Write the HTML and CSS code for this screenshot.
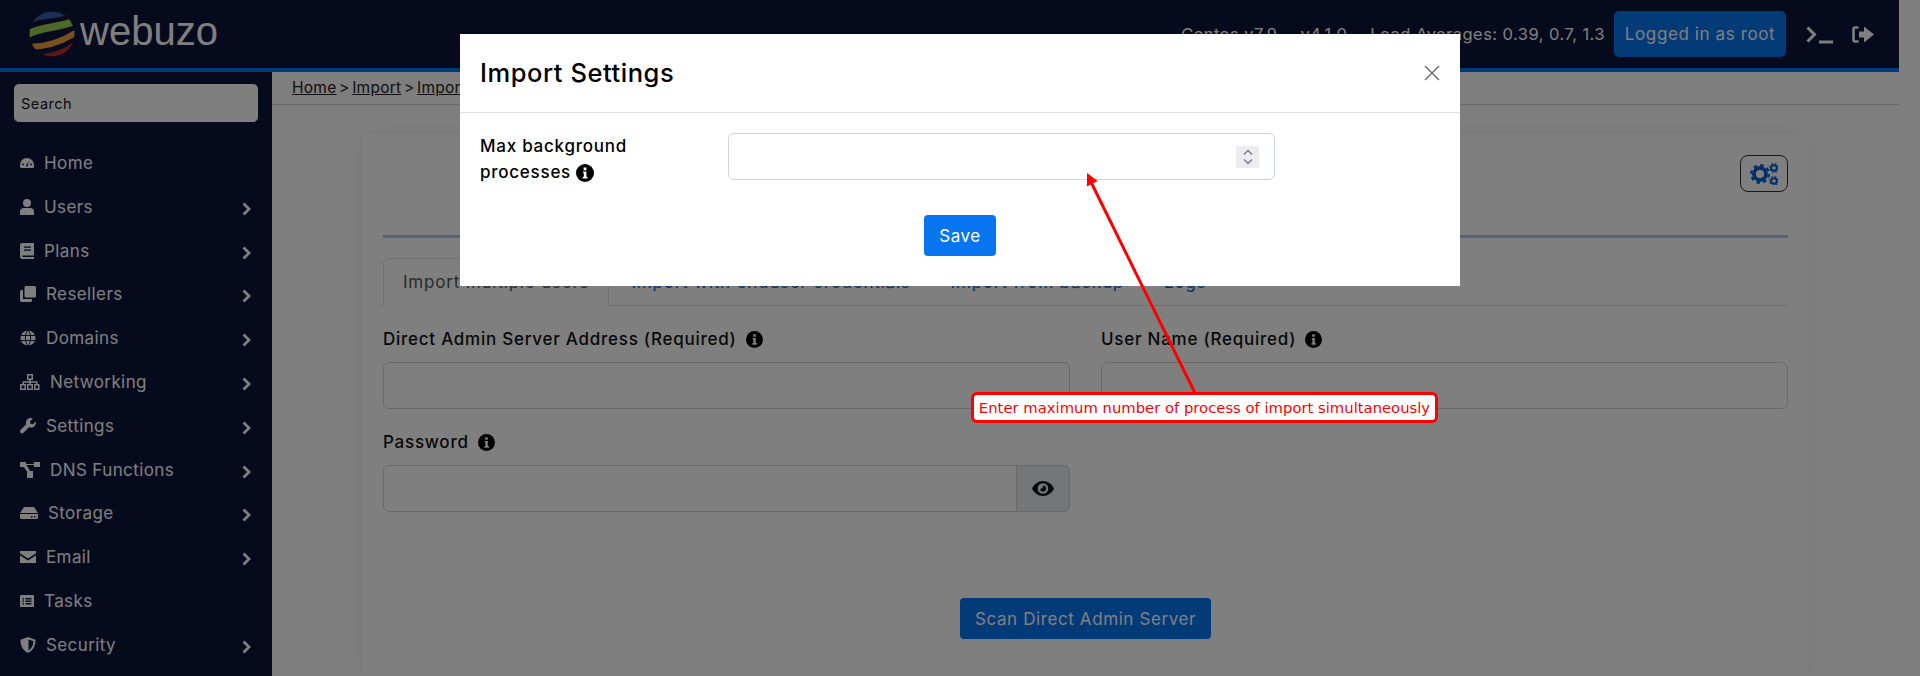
FILE: index.html
```html
<!DOCTYPE html>
<html lang="en">
<head>
<meta charset="utf-8">
<title>Webuzo - Import Settings</title>
<link rel="stylesheet" href="styles.css">
</head>
<body>
<div class="page">
  <header class="topbar">
    <a class="logo">
      <svg class="logo-mark" viewBox="28 10 48 48" width="48" height="48">
        <defs><clipPath id="sphere"><circle cx="52" cy="34" r="22.5"/></clipPath></defs>
        <g clip-path="url(#sphere)" fill="none" stroke-linecap="butt">
          <path d="M28 22C38 13 54 17 68 11" stroke="#3a5ea8" stroke-width="7"/>
          <path d="M27 35C40 26 58 29 77 20" stroke="#9ad050" stroke-width="7.5"/>
          <path d="M29 47C42 47 60 43 77 32" stroke="#f0a040" stroke-width="6"/>
          <path d="M40 57C52 56 66 52 77 42" stroke="#b83030" stroke-width="5"/>
        </g>
      </svg>
      <span class="logo-text">webuzo</span>
    </a>
    <div class="status">
      <span>Centos v7.9</span>
      <span>v4.1.0</span>
      <span>Load Averages: 0.39, 0.7, 1.3</span>
    </div>
    <button class="btn btn-user">Logged in as root</button>
    <svg class="icon-terminal" viewBox="0 0 27 18" width="27" height="18"><path d="M1.5 1.5 8.5 8.5 1.5 15.5" fill="none" stroke="currentColor" stroke-width="3"/><rect x="13" y="14.5" width="14" height="3" fill="currentColor"/></svg>
    <svg class="icon-logout" viewBox="0 0 22 17" width="22" height="17"><path d="M6.5 1.5H3A1.5 1.5 0 0 0 1.500 3V14A1.500 1.500 0 0 0 3 15.500H6.500" fill="none" stroke="currentColor" stroke-width="2.600"/><path d="M7 5.500H12V0.500L22 8.500 12 16.500V11.500H7Z" fill="currentColor"/></svg>
  </header>

  <div class="shell">
    <aside class="sidebar">
      <input class="search" type="text" placeholder="Search">
      <nav class="menu">
        <a class="item">
          <svg width="14" height="14" viewBox="0 0 14 14"><path fill-rule="evenodd" d="M7 2a7 7 0 0 1 7 7v2a1 1 0 0 1-1 1H1a1 1 0 0 1-1-1V9a7 7 0 0 1 7-7ZM6.300 9a.9.9 0 1 0 1.400 0L9 5 6.300 9ZM3 7.500a.9.900 0 1 0 0 1.800.9.900 0 0 0 0-1.800ZM11 7.500a.9.900 0 1 0 0 1.800.9.900 0 0 0 0-1.800Z" fill="currentColor"/></svg>
          <span>Home</span>
        </a>
        <a class="item">
          <svg width="14" height="16" viewBox="0 0 14 16"><circle cx="7" cy="4" r="4" fill="currentColor"/><path d="M0 16V13a4 4 0 0 1 4-4h6a4 4 0 0 1 4 4v3Z" fill="currentColor"/></svg>
          <span>Users</span>
          <svg class="chev" width="9" height="14" viewBox="0 0 9 14"><path d="M1.500 1.500 7 7 1.500 12.500" fill="none" stroke="currentColor" stroke-width="2.400"/></svg>
        </a>
        <a class="item">
          <svg width="14" height="16" viewBox="0 0 14 16"><path fill-rule="evenodd" d="M2 0H14V12.500H2.500V14H14V16H2A2 2 0 0 1 0 14V2A2 2 0 0 1 2 0ZM4 3.500V4.800H11V3.500ZM4 6.500V7.800H11V6.500Z" fill="currentColor"/></svg>
          <span>Plans</span>
          <svg class="chev" width="9" height="14" viewBox="0 0 9 14"><path d="M1.500 1.500 7 7 1.500 12.500" fill="none" stroke="currentColor" stroke-width="2.400"/></svg>
        </a>
        <a class="item">
          <svg width="16" height="16" viewBox="0 0 16 16"><rect x="4.500" y="0" width="11.500" height="11.500" rx="1.500" fill="currentColor"/><path d="M3 4H1.500A1.500 1.500 0 0 0 0 5.500V14.500A1.500 1.500 0 0 0 1.500 16H10.500A1.500 1.500 0 0 0 12 14.500V13H3Z" fill="currentColor"/></svg>
          <span>Resellers</span>
          <svg class="chev" width="9" height="14" viewBox="0 0 9 14"><path d="M1.500 1.500 7 7 1.500 12.500" fill="none" stroke="currentColor" stroke-width="2.400"/></svg>
        </a>
        <a class="item">
          <svg width="16" height="16" viewBox="0 0 16 16"><circle cx="8" cy="8" r="7.500" fill="currentColor"/><path d="M0 5.500H16M0 10.500H16M8 0C4.500 4 4.500 12 8 16M8 0C11.500 4 11.500 12 8 16" fill="none" stroke="#0c143a" stroke-width="1"/></svg>
          <span>Domains</span>
          <svg class="chev" width="9" height="14" viewBox="0 0 9 14"><path d="M1.500 1.500 7 7 1.500 12.500" fill="none" stroke="currentColor" stroke-width="2.400"/></svg>
        </a>
        <a class="item">
          <svg width="20" height="16" viewBox="0 0 20 16"><path fill-rule="evenodd" d="M7 0H13V6H10.800V7.300H17.500V10H19.500V16H14V10H16V8.700H10.800V10H13V16H7V10H9.200V8.700H4V10H6V16H0V10H2.500V7.300H9.200V6H7ZM8.500 1.500V4.500H11.500V1.500ZM1.500 11.500V14.500H4.500V11.500ZM8.500 11.500V14.500H11.500V11.500ZM15.500 11.500V14.500H18V11.500Z" fill="currentColor"/></svg>
          <span>Networking</span>
          <svg class="chev" width="9" height="14" viewBox="0 0 9 14"><path d="M1.500 1.500 7 7 1.500 12.500" fill="none" stroke="currentColor" stroke-width="2.400"/></svg>
        </a>
        <a class="item">
          <svg width="16" height="16" viewBox="0 0 16 16"><path d="M15.800 3.500 13 6.300 10.500 5.700 10 3.200 12.800.4C10.800-.5 8.500 0 7.200 1.500 5.900 2.800 5.600 4.700 6.200 6.300L.7 11.800A2 2 0 0 0 3.500 14.700L9 9.200C11 10 13.200 9.500 14.600 8 15.900 6.700 16.300 5 15.800 3.500Z" fill="currentColor"/></svg>
          <span>Settings</span>
          <svg class="chev" width="9" height="14" viewBox="0 0 9 14"><path d="M1.500 1.500 7 7 1.500 12.500" fill="none" stroke="currentColor" stroke-width="2.400"/></svg>
        </a>
        <a class="item">
          <svg width="20" height="16" viewBox="0 0 20 16"><path d="M0 0H6V2H14V0H20V5H14V3H6.500L10 9H13V16H7V9.500L3.800 5H0Z" fill="currentColor"/></svg>
          <span>DNS Functions</span>
          <svg class="chev" width="9" height="14" viewBox="0 0 9 14"><path d="M1.500 1.500 7 7 1.500 12.500" fill="none" stroke="currentColor" stroke-width="2.400"/></svg>
        </a>
        <a class="item">
          <svg width="18" height="12" viewBox="0 0 18 12"><path d="M4 0H14L18 6H0Z" fill="currentColor"/><path fill-rule="evenodd" d="M0 7H18V10.500A1.500 1.500 0 0 1 16.500 12H1.500A1.500 1.500 0 0 1 0 10.500ZM11 9V10.500H12.500V9ZM14 9V10.500H15.500V9Z" fill="currentColor"/></svg>
          <span>Storage</span>
          <svg class="chev" width="9" height="14" viewBox="0 0 9 14"><path d="M1.500 1.500 7 7 1.500 12.500" fill="none" stroke="currentColor" stroke-width="2.400"/></svg>
        </a>
        <a class="item">
          <svg width="16" height="12" viewBox="0 0 16 12"><path d="M0 0H16V2.200L8 7.500 0 2.200ZM0 4.200 8 9.500 16 4.200V12H0Z" fill="currentColor"/></svg>
          <span>Email</span>
          <svg class="chev" width="9" height="14" viewBox="0 0 9 14"><path d="M1.500 1.500 7 7 1.500 12.500" fill="none" stroke="currentColor" stroke-width="2.400"/></svg>
        </a>
        <a class="item">
          <svg width="14" height="12" viewBox="0 0 14 12"><path fill-rule="evenodd" d="M1 0H13A1 1 0 0 1 14 1V11A1 1 0 0 1 13 12H1A1 1 0 0 1 0 11V1A1 1 0 0 1 1 0ZM2.500 3V4.500H4V3ZM5.500 3V4.500H11.500V3ZM2.500 5.500V7H4V5.500ZM5.500 5.500V7H11.500V5.500ZM2.500 8V9.500H4V8ZM5.500 8V9.500H11.500V8Z" fill="currentColor"/></svg>
          <span>Tasks</span>
        </a>
        <a class="item">
          <svg width="16" height="16" viewBox="0 0 16 16"><path fill-rule="evenodd" d="M8 0 15.500 2.800C15.800 8.500 13 13.800 8 16 3 13.800.2 8.500.5 2.800ZM8.500 2.500V13.500C11.500 11.800 13.300 8.300 13.400 4.300Z" fill="currentColor"/></svg>
          <span>Security</span>
          <svg class="chev" width="9" height="14" viewBox="0 0 9 14"><path d="M1.500 1.500 7 7 1.500 12.500" fill="none" stroke="currentColor" stroke-width="2.400"/></svg>
        </a>
      </nav>
    </aside>

    <main class="content">
      <div class="crumbs"><a>Home</a> &gt; <a>Import</a> &gt; <a>Import</a></div>
      <section class="card">
        <div class="card-head">
          <button class="gear-btn" aria-label="Import settings">
            <svg width="28" height="22" viewBox="0 0 28 22">
              <circle cx="10" cy="11" r="6" fill="none" stroke="#0a5fd0" stroke-width="3.800"/>
              <circle cx="10" cy="11" r="8.800" fill="none" stroke="#0a5fd0" stroke-width="2.400" stroke-dasharray="3.500 3.410"/>
              <circle cx="24" cy="5" r="2.800" fill="none" stroke="#0a5fd0" stroke-width="2"/>
              <circle cx="24" cy="5" r="4.300" fill="none" stroke="#0a5fd0" stroke-width="1.400" stroke-dasharray="1.800 1.580"/>
              <circle cx="24" cy="18" r="2.800" fill="none" stroke="#0a5fd0" stroke-width="2"/>
              <circle cx="24" cy="18" r="4.300" fill="none" stroke="#0a5fd0" stroke-width="1.400" stroke-dasharray="1.800 1.580"/>
            </svg>
          </button>
        </div>
        <hr class="rule">
        <ul class="tabs">
          <li class="tab active">Import multiple users</li>
          <li class="tab">Import with enduser credentials</li>
          <li class="tab">Import from backup</li>
          <li class="tab">Logs</li>
        </ul>
        <form class="form">
          <div class="field">
            <label class="label">Direct Admin Server Address (Required) <svg class="info" width="17" height="17" viewBox="0 0 17 17"><circle cx="8.500" cy="8.500" r="8.500"/><path d="M7.200 3.300H9.800V5.800H7.200ZM6.800 7H9.800V12H10.800V13.700H6.400V12H7.400V8.700H6.800Z" fill="#fff"/></svg></label>
            <input class="input" type="text">
          </div>
          <div class="field">
            <label class="label">User Name (Required) <svg class="info" width="17" height="17" viewBox="0 0 17 17"><circle cx="8.500" cy="8.500" r="8.500"/><path d="M7.200 3.300H9.800V5.800H7.200ZM6.800 7H9.800V12H10.800V13.700H6.400V12H7.400V8.700H6.800Z" fill="#fff"/></svg></label>
            <input class="input" type="text">
          </div>
          <div class="field">
            <label class="label">Password <svg class="info" width="17" height="17" viewBox="0 0 17 17"><circle cx="8.500" cy="8.500" r="8.500"/><path d="M7.200 3.300H9.800V5.800H7.200ZM6.800 7H9.800V12H10.800V13.700H6.400V12H7.400V8.700H6.800Z" fill="#fff"/></svg></label>
            <div class="input-group">
              <input class="input input-flat" type="password">
              <span class="addon">
                <svg width="22" height="15" viewBox="0 0 22 15"><path fill-rule="evenodd" d="M11 0C16 0 20 3.200 22 7.500 20 11.800 16 15 11 15S2 11.800 0 7.500C2 3.200 6 0 11 0ZM11 2.200A5.300 5.300 0 1 0 11 12.800 5.300 5.300 0 0 0 11 2.200ZM11 4.400A3.100 3.100 0 1 1 8 8C9.800 8 11.200 6.500 11 4.400Z" fill="#111"/></svg>
              </span>
            </div>
          </div>
        </form>
        <div class="actions"><button class="btn btn-scan">Scan Direct Admin Server</button></div>
      </section>
    </main>
  </div>
</div>

<div class="backdrop">
  <div class="modal">
    <div class="modal-head">
      <h2 class="modal-title">Import Settings</h2>
      <svg class="close" width="16" height="16" viewBox="0 0 16 16"><path d="M1 1 15 15M15 1 1 15" stroke="#6f6f6f" stroke-width="1.500" fill="none"/></svg>
    </div>
    <div class="modal-body">
      <div class="modal-row">
        <label class="modal-label">Max background processes <svg class="info-m" width="18" height="18" viewBox="0 0 17 17"><circle cx="8.500" cy="8.500" r="8.500"/><path d="M7.200 3.300H9.800V5.800H7.200ZM6.800 7H9.800V12H10.800V13.700H6.400V12H7.400V8.700H6.800Z" fill="#fff"/></svg></label>
        <div class="number">
          <span class="spin">
            <svg width="12" height="18" viewBox="0 0 12 18"><path d="M2 6.500 6 2.500 10 6.500M2 11.500 6 15.500 10 11.500" fill="none" stroke="#77778a" stroke-width="1.300"/></svg>
          </span>
        </div>
      </div>
      <div class="modal-actions"><button class="btn btn-save">Save</button></div>
    </div>
  </div>

  <svg class="callout-arrow" width="1920" height="676" viewBox="0 0 1920 676">
    <path d="M1195 393 1091 182" stroke="#f00" stroke-width="3" fill="none"/>
    <path d="M1087 173 1097.700 181.100 1086.900 186.500Z" fill="#f00"/>
  </svg>
  <div class="callout">Enter maximum number of process of import simultaneously</div>
</div>
</body>
</html>
```
FILE: styles.css
```css
* { box-sizing: border-box; }
html, body { margin: 0; height: 676px; overflow: hidden; background: #fff; }
body { font-family: Inter, "Noto Sans", "Liberation Sans", sans-serif; font-size: 16px; color: #111; }
svg { display: block; flex: none; }

.page { margin-right: 21px; height: 676px; display: flex; flex-direction: column; overflow: hidden; }

.topbar { height: 72px; flex: none; background: #0c143a; border-bottom: 4px solid #0774f0; color: #fff; display: flex; align-items: center; padding: 0 25px 0 28px; }
.logo { display: flex; align-items: center; gap: 4px; }
.logo-text { font-family: "Liberation Sans", Arial, sans-serif; font-size: 40px; line-height: 48px; color: #fff; margin-top: -6px; }
.status { margin-left: auto; display: flex; gap: 23px; font-size: 16.500px; letter-spacing: .45px; margin-right: 9px; white-space: nowrap; }
.btn { border: 0; border-radius: 5px; background: #0774f0; color: #fff; font: inherit; font-size: 17px; letter-spacing: .6px; white-space: nowrap; }
.btn-user { width: 172px; height: 46px; padding: 0; }
.icon-terminal { margin-left: 20px; margin-top: 1px; }
.icon-logout { margin-left: 19px; }

.shell { flex: 1; display: flex; min-height: 0; }
.sidebar { width: 272px; flex: none; background: #0c143a; color: #fff; padding: 12px 14px 0; }
.search { display: block; width: 244px; height: 38px; border: 0; border-radius: 5px; padding: 0 7px; background: #fff; font: 14.500px Inter, sans-serif; letter-spacing: .5px; }
.search::placeholder { color: #111; opacity: 1; }
.menu { margin: 19px 0 0 6px; width: 232px; }
.item { height: 43.820px; display: flex; align-items: center; gap: 10px; font-size: 17px; letter-spacing: .4px; }
.chev { margin-left: auto; margin-top: 4px; margin-right: 1px; }
.chev path { stroke-width: 2.800px; }

.content { flex: 1; min-width: 0; background: #fdfdfd; display: flex; flex-direction: column; }
.crumbs { height: 33px; flex: none; line-height: 31px; padding-left: 20px; border-bottom: 1px solid #d6d6d6; font-size: 15.500px; letter-spacing: .25px; word-spacing: -2px; color: #222; white-space: nowrap; }
.crumbs a { text-decoration: underline; }
.card { flex: 1; min-height: 0; margin: 30px 91px 0; padding: 20px 20px 0; background: #fff; box-shadow: 0 0 24px rgba(0, 0, 0, .03); }
.card-head { display: flex; justify-content: flex-end; }
.gear-btn { width: 48px; height: 37px; padding: 0; border: 1px solid #333; border-radius: 8px; background: transparent; display: flex; align-items: center; justify-content: center; }
.rule { height: 3px; border: 0; margin: 43px 0 20px; background: #a8c8f0; }

.tabs { list-style: none; display: flex; margin: 0; padding: 0; height: 48px; border-bottom: 1px solid #dee2e6; }
.tab { padding: 0 19px; line-height: 46px; color: #0a5fd0; white-space: nowrap; font-size: 17px; letter-spacing: .8px; border: 1px solid transparent; border-bottom: 0; }
.tab.active { color: #555; border-color: #dee2e6; background: #fff; border-radius: 6px 6px 0 0; margin-right: 2px; height: 48px; }

.form { margin-top: 21px; display: grid; grid-template-columns: 1fr 1fr; column-gap: 31px; row-gap: 21px; }
.label { display: flex; align-items: center; gap: 9px; height: 24px; margin-bottom: 11px; font-weight: 500; font-size: 17px; letter-spacing: .75px; color: #111; }
.input { display: block; width: 100%; height: 47px; border: 1px solid #ced4da; border-radius: 6px; background: #fff; }
.input-group { display: flex; }
.input-flat { border-radius: 6px 0 0 6px; flex: 1; }
.addon { width: 53px; flex: none; background: #e9ecef; border: 1px solid #ced4da; border-left: 0; border-radius: 0 6px 6px 0; display: flex; align-items: center; justify-content: center; }
.actions { margin-top: 86px; display: flex; justify-content: center; }
.btn-scan { width: 251px; height: 41px; padding: 0; border-radius: 4px; }

.backdrop { position: fixed; inset: 0; background: rgba(0, 0, 0, .5); }
.modal { position: absolute; left: 460px; top: 34px; width: 1000px; height: 252px; background: #fff; color: #000; }
.modal-head { height: 79px; border-bottom: 1px solid #dee2e6; display: flex; align-items: center; justify-content: space-between; padding: 0 20px; }
.modal-title { margin: 0; font-size: 25.500px; font-weight: 500; letter-spacing: .55px; line-height: 36px; }
.modal-body { padding: 20px; }
.modal-row { display: flex; align-items: flex-start; }
.modal-label { width: 248px; padding-right: 60px; font-weight: 500; font-size: 17px; letter-spacing: .75px; line-height: 26px; }
.info-m { display: inline-block; vertical-align: -4px; }
.number { width: 547px; height: 47px; border: 1px solid #ced4da; border-radius: 6px; display: flex; align-items: center; justify-content: flex-end; padding-right: 15px; }
.spin { width: 23px; height: 22px; background: #ebebf0; display: flex; align-items: center; justify-content: center; }
.modal-actions { margin-top: 30px; display: flex; justify-content: center; }
.btn-save { width: 72px; height: 41px; padding: 0; border-radius: 4px; }

.callout-arrow { position: absolute; left: 0; top: 0; pointer-events: none; }
.callout { position: absolute; left: 971px; top: 392px; width: 467px; height: 31px; background: #fff; border: 3px solid #f00; border-radius: 6px; color: #f00; font-family: "DejaVu Sans", sans-serif; font-size: 14.800px; line-height: 25px; text-align: center; white-space: nowrap; }
```
